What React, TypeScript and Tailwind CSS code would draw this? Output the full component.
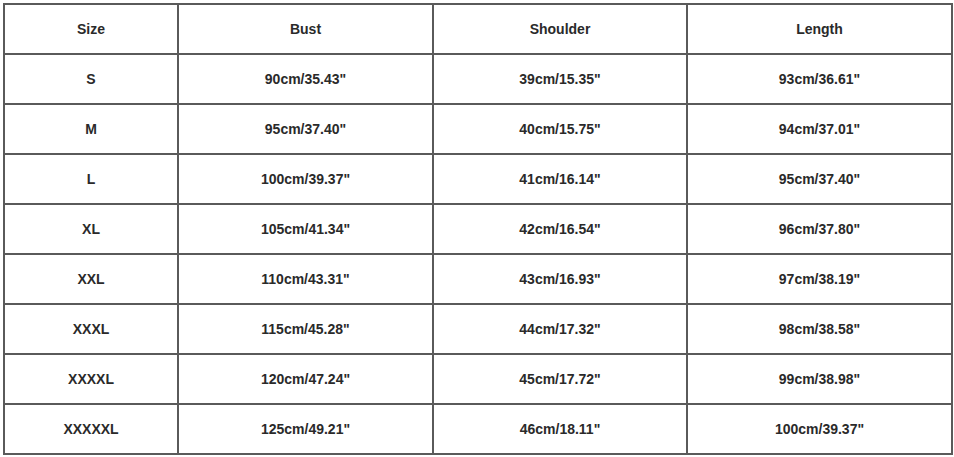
const headers = ['Size', 'Bust', 'Shoulder', 'Length'];

const rows = [
  ['S', '90cm/35.43"', '39cm/15.35"', '93cm/36.61"'],
  ['M', '95cm/37.40"', '40cm/15.75"', '94cm/37.01"'],
  ['L', '100cm/39.37"', '41cm/16.14"', '95cm/37.40"'],
  ['XL', '105cm/41.34"', '42cm/16.54"', '96cm/37.80"'],
  ['XXL', '110cm/43.31"', '43cm/16.93"', '97cm/38.19"'],
  ['XXXL', '115cm/45.28"', '44cm/17.32"', '98cm/38.58"'],
  ['XXXXL', '120cm/47.24"', '45cm/17.72"', '99cm/38.98"'],
  ['XXXXXL', '125cm/49.21"', '46cm/18.11"', '100cm/39.37"'],
];

const widths = ['w-[174px]', 'w-[255px]', 'w-[254px]', 'w-[265px]'];

export default function App() {
  return (
    <div className="w-[954px] h-[457px] bg-white pl-[3px] pt-[3px] font-['Liberation_Sans',Arial,sans-serif]">
      <table className="border-collapse table-fixed text-[14px] font-bold text-[#2a2a2a]">
        <colgroup>
          {widths.map((w) => (
            <col key={w} className={w} />
          ))}
        </colgroup>
        <thead>
          <tr className="h-[50px]">
            {headers.map((h) => (
              <th key={h} className="border-2 border-[#5a5a5a] text-center font-bold">
                {h}
              </th>
            ))}
          </tr>
        </thead>
        <tbody>
          {rows.map((r) => (
            <tr key={r[0]} className="h-[50px]">
              {r.map((c, i) => (
                <td key={i} className="border-2 border-[#5a5a5a] text-center">
                  {c}
                </td>
              ))}
            </tr>
          ))}
        </tbody>
      </table>
    </div>
  );
}
